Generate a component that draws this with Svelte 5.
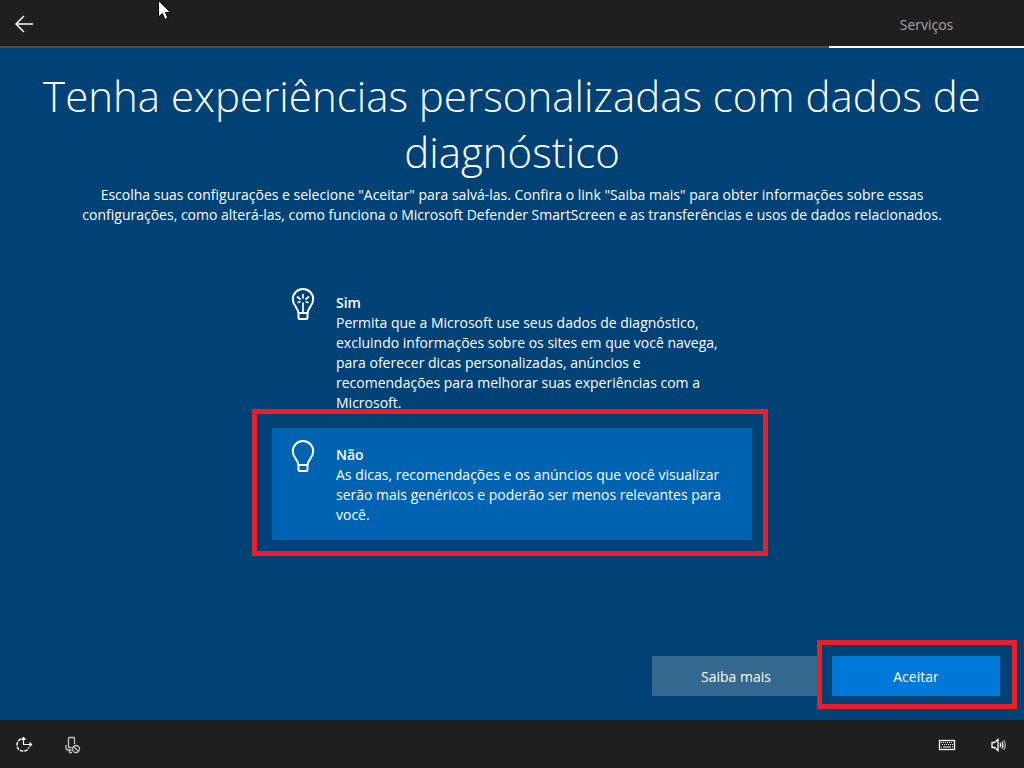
<script>
  const options = [
    {
      id: 'yes',
      title: 'Sim',
      text: 'Permita que a Microsoft use seus dados de diagnóstico, excluindo informações sobre os sites em que você navega, para oferecer dicas personalizadas, anúncios e recomendações para melhorar suas experiências com a Microsoft.'
    },
    {
      id: 'no',
      title: 'Não',
      text: 'As dicas, recomendações e os anúncios que você visualizar serão mais genéricos e poderão ser menos relevantes para você.'
    }
  ];
  let choice = $state('no');
</script>

<div class="screen">
  <header>
    <button class="icon-button" aria-label="Voltar">
      <svg width="20" height="20" viewBox="0 0 20 20" fill="none" stroke="#fff" stroke-width="1.5">
        <path d="M19 10H2M10 2L2 10l8 8" />
      </svg>
    </button>
    <div class="tab">Serviços</div>
  </header>

  <main>
    <h1>Tenha experiências personalizadas com dados de diagnóstico</h1>
    <p class="intro">
      Escolha suas configurações e selecione "Aceitar" para salvá-las. Confira o link "Saiba mais" para obter
      informações sobre essas configurações, como alterá-las, como funciona o Microsoft Defender SmartScreen e as
      transferências e usos de dados relacionados.
    </p>

    <div class="options" role="radiogroup">
      {#each options as option}
        <label class="option" class:selected={choice === option.id}>
          <input type="radio" name="diagnostics" value={option.id} bind:group={choice} />
          <svg class="bulb" width="24" height="32" viewBox="0 0 24 32" fill="none" stroke="#fff" stroke-width="2">
            <path d="M7.5 25.5C7.5 19.5 1.8 18 1.8 11.200A10.200 10.200 0 0 1 22.200 11.200C22.200 18 16.500 19.500 16.500 25.500" />
            <path d="M7.500 25H16.500V29.500Q16.500 31 15 31H9Q7.500 31 7.500 29.500Z" />
            {#if option.id === 'yes'}
              <path d="M12 14.500V24M12 6V10.500M6 8.500L9.500 11.500M18 8.500L14.500 11.500M6.500 14.800L9.500 13.500M17.500 14.800L14.500 13.500" stroke-width="1.700" />
            {/if}
          </svg>
          <span class="copy">
            <strong>{option.title}</strong>
            <span>{option.text}</span>
          </span>
          {#if option.id === 'no'}<span class="frame option-frame"></span>{/if}
        </label>
      {/each}
    </div>

    <div class="actions">
      <button class="action">Saiba mais</button>
      <div class="accept">
        <button class="action primary">Aceitar</button>
        <span class="frame accept-frame"></span>
      </div>
    </div>
  </main>

  <footer>
    <div class="tools">
      <button class="icon-button" aria-label="Facilidade de acesso">
        <svg width="18" height="18" viewBox="0 0 18 18" fill="none" stroke="#fff" stroke-width="1.500">
          <path d="M6 3A6.300 6.300 0 1 0 14 11.500" stroke-dasharray="3.500 1.100" />
          <path d="M8.500 1.500V8.500H16.500M6.500 3.500l2-2 2 2M14.500 6.500l2 2-2 2" stroke-width="1.200" />
        </svg>
      </button>
      <button class="icon-button" aria-label="Microfone desativado">
        <svg width="18" height="18" viewBox="0 0 18 18" fill="none" stroke="#c4c4c4" stroke-width="1.300">
          <path d="M11.500 8V2.500Q11.500 1.500 10.500 1.500H6.500Q5.500 1.500 5.500 2.500V11.500H8.500M3 9V12.500Q3 14 4.500 14H8.500M6.500 14V16.500H9" />
          <circle cx="13" cy="13" r="3.500" />
          <path d="M10.500 10.500l5 5" />
        </svg>
      </button>
    </div>
    <div class="tools system">
      <button class="icon-button" aria-label="Teclado">
        <svg width="18" height="18" viewBox="0 0 18 18" fill="none" stroke="#fff">
          <rect x="1.500" y="4.500" width="15" height="9" stroke-width="1.300" />
          <path d="M3 6.500H15M4 8.500H15" stroke-dasharray="1 1" stroke-width="1.200" />
          <path d="M3 11H4M5 11H13M14 11H15" />
        </svg>
      </button>
      <button class="icon-button" aria-label="Volume">
        <svg width="18" height="18" viewBox="0 0 18 18" fill="none" stroke="#fff" stroke-width="1.300">
          <path d="M2 6.500H4.500L8 3.500V14.500L4.500 11.500H2Z" />
          <path d="M10 7Q11.500 9 10 11M11.800 5.500Q14.200 9 11.800 12.500" />
          <path d="M13.700 4Q17 9 13.700 14" stroke="#aaa" />
        </svg>
      </button>
    </div>
  </footer>

  <svg class="pointer" width="14" height="21" viewBox="0 0 14 21">
    <path d="M.5 .5V17L4.300 13.500L7 19.500L10 18.200L7.400 12.500H12.500Z" fill="#fff" stroke="#000" />
  </svg>
</div>

<style>
  :global(body) {
    margin: 0;
  }
  .screen {
    position: relative;
    display: flex;
    flex-direction: column;
    min-height: 100vh;
    background: #004275;
    color: #fff;
    font: 14px/20px 'Open Sans', 'Noto Sans', sans-serif;
  }
  header,
  footer {
    display: flex;
    justify-content: space-between;
    height: 48px;
    background: #1f1f1f;
  }
  header {
    background: linear-gradient(#1f1f1f 46px, #4c4c4c 46px);
  }
  .tab {
    box-sizing: border-box;
    width: 195px;
    padding-top: 15px;
    border-bottom: 2px solid #fff;
    color: #a5a5a5;
    text-align: center;
  }
  button {
    border: 0;
    color: inherit;
    font: inherit;
  }
  .icon-button {
    display: grid;
    place-items: center;
    width: 48px;
    padding: 0;
    background: none;
  }
  main {
    display: flex;
    flex: 1;
    flex-direction: column;
    padding: 20px 24px 24px;
  }
  h1 {
    margin: 0;
    font-size: 42px;
    font-weight: 300;
    line-height: 56px;
    text-align: center;
  }
  .intro {
    max-width: 900px;
    margin: 5px auto 51px;
    text-align: center;
  }
  .options {
    width: 100%;
    max-width: 480px;
    margin: 0 auto;
  }
  .option {
    position: relative;
    display: flex;
    gap: 21px;
    padding: 12px 24px 15px 19px;
  }
  .option input {
    position: absolute;
    opacity: 0;
  }
  .selected {
    background: #0063b1;
  }
  .bulb {
    flex: none;
  }
  .copy {
    padding-top: 5px;
  }
  .copy strong {
    display: block;
    font-weight: 600;
  }
  .frame {
    position: absolute;
    border: 5px solid #e81f27;
    pointer-events: none;
  }
  .option-frame {
    inset: -19px -16px -16px -20px;
  }
  .accept-frame {
    inset: -16px -17px -13px -15px;
  }
  .actions {
    display: flex;
    justify-content: flex-end;
    gap: 12px;
    margin-top: auto;
  }
  .accept {
    position: relative;
  }
  .action {
    width: 168px;
    height: 40px;
    padding: 2px 0 0;
    background: #33688f;
  }
  .primary {
    background: #0078d7;
  }
  .tools {
    display: flex;
    padding-top: 1px;
  }
  .system {
    gap: 4px;
    padding-right: 1px;
  }
  .pointer {
    position: absolute;
    top: 0;
    left: 158px;
  }
</style>
